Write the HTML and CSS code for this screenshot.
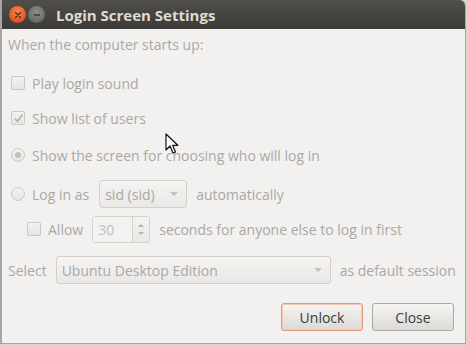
FILE: index.html
```html
<!DOCTYPE html>
<html>
<head>
<meta charset="utf-8">
<link rel="stylesheet" href="styles.css">
</head>
<body>
<div class="window">
  <div class="titlebar">
    <span class="wbtn close-btn"><svg width="8" height="8" viewBox="0 0 8 8"><path d="M1.5 1.5 L6.5 6.5 M6.5 1.5 L1.5 6.5" stroke="#5a2a14" stroke-width="1.4" stroke-linecap="round"/></svg></span>
    <span class="wbtn min-btn"><svg width="8" height="8" viewBox="0 0 8 8"><path d="M1 4 H7" stroke="#3a3a38" stroke-width="1.6"/></svg></span>
    <span class="title">Login Screen Settings</span>
  </div>
  <div class="content">
    <div class="row r-head">When the computer starts up:</div>
    <div class="row r-play"><span class="check"></span><span class="lbl">Play login sound</span></div>
    <div class="row r-list"><span class="check checked"><svg width="11" height="11" viewBox="0 0 11 11"><path d="M2 5.5 L4.5 8.5 L9.5 1.5" fill="none" stroke="#b4b2ae" stroke-width="1.6"/></svg></span><span class="lbl">Show list of users</span></div>
    <div class="row r-screen"><span class="radio on"></span><span class="lbl">Show the screen for choosing who will log in</span></div>
    <div class="row r-login"><span class="radio"></span><span class="lbl">Log in as</span><span class="combo combo-user"><span class="ctext">sid (sid)</span><span class="arrow"></span></span><span class="lbl after">automatically</span></div>
    <div class="row r-allow"><span class="check"></span><span class="lbl">Allow</span><span class="spin"><span class="spin-entry">30</span><span class="spin-btns"><span class="up"></span><span class="down"></span></span></span><span class="lbl after">seconds for anyone else to log in first</span></div>
    <div class="row r-select"><span class="lbl plain">Select</span><span class="combo combo-session"><span class="ctext">Ubuntu Desktop Edition</span><span class="arrow"></span></span><span class="lbl after">as default session</span></div>
    <div class="buttons"><button class="btn focus">Unlock</button><button class="btn">Close</button></div>
  </div>
  <svg class="cursor" width="14" height="22" viewBox="0 0 14 22"><path d="M1 1 L1 17 L5 13 L8 20 L10.5 19 L7.6 12.3 L12.8 12.3 Z" fill="#fff" stroke="#111" stroke-width="1.2" stroke-linejoin="round"/></svg>
</div>
</body>
</html>
```
FILE: styles.css
```css
* { box-sizing: border-box; }
html, body { margin: 0; padding: 0; background: #d8d6d2; }
body { width: 468px; height: 345px; overflow: hidden; font-family: "Open Sans", "DejaVu Sans", sans-serif; }
.window {
  position: relative;
  width: 466px; height: 344px;
  background: #f2f1f0;
  border-left: 2px solid #a8a6a2;
  border-right: 1px solid #a8a6a2;
  border-bottom: 1px solid #a8a6a2;
  border-top-right-radius: 6px;
  overflow: hidden;
  display: flex; flex-direction: column;
}
.titlebar {
  height: 29px; flex: none;
  background: linear-gradient(#4f4e49, #3c3b37);
  display: flex; align-items: center;
  padding-left: 9px;
  margin-left: -2px; margin-right: -1px;
}
.wbtn {
  width: 17px; height: 17px; border-radius: 50%;
  display: flex; align-items: center; justify-content: center;
  margin-right: 2px;
}
.close-btn { background: radial-gradient(circle at 50% 35%, #f98d5c, #e0531a 70%, #b8451a); }
.min-btn { background: radial-gradient(circle at 50% 35%, #8f8d88, #6c6a66 70%, #55534f); }
.title {
  margin-left: 9px;
  color: #dfdbd2; font-weight: bold; font-size: 15px;
  font-family: "Open Sans", "DejaVu Sans", sans-serif;
}
.content { display: flex; flex-direction: column; padding-left: 6px; color: #aaa8a4; font-size: 14px; }
.row { display: flex; align-items: center; white-space: nowrap; }
.r-head { height: 30px; }
.r-play { height: 30px; margin-top: 9px; }
.r-list { height: 30px; margin-top: 5px; }
.r-screen { height: 30px; margin-top: 7px; }
.r-login { height: 28px; margin-top: 10px; }
.r-allow { height: 28px; margin-top: 7px; padding-left: 16px; }
.r-select { height: 28px; margin-top: 13px; }
.check, .radio {
  width: 14px; height: 14px; flex: none;
  margin-left: 3px; margin-right: 7px;
  border: 1px solid #cbc9c5;
  background: linear-gradient(#f3f2f1, #e6e5e3);
  display: flex; align-items: center; justify-content: center;
}
.check { border-radius: 2px; }
.radio { border-radius: 50%; }
.radio.on::after { content: ""; width: 6px; height: 6px; border-radius: 50%; background: #c4c2be; }
.lbl.after { margin-left: 9px; }
.combo {
  display: flex; align-items: center; justify-content: space-between;
  height: 28px;
  border: 1px solid #d3d0cc; border-radius: 3px;
  background: linear-gradient(#f5f4f3, #e9e8e6);
  padding: 0 8px 0 5px;
}
.combo-user { width: 88px; margin-left: 10px; }
.combo-session { width: 275px; margin-left: 9px; }
.arrow { width: 0; height: 0; border-left: 4px solid transparent; border-right: 4px solid transparent; border-top: 4px solid #c4c2be; }
.spin {
  display: flex; height: 27px; width: 58px; margin-left: 9px;
  border: 1px solid #d6d3cf; border-radius: 3px; overflow: hidden;
}
.spin-entry { flex: 1; padding-left: 5px; display: flex; align-items: center; background: #f3f2f1; color: #c2c0bc; }
.spin-btns { width: 17px; border-left: 1px solid #d6d3cf; background: linear-gradient(#f4f3f2, #e8e7e5); display: flex; flex-direction: column; align-items: center; justify-content: center; gap: 5px; }
.up { width: 0; height: 0; border-left: 3px solid transparent; border-right: 3px solid transparent; border-bottom: 3px solid #b5b3af; }
.down { width: 0; height: 0; border-left: 3px solid transparent; border-right: 3px solid transparent; border-top: 3px solid #b5b3af; }
.buttons { display: flex; justify-content: flex-end; gap: 9px; margin-top: 19px; padding-right: 11px; }
.btn {
  width: 82px; height: 28px;
  font-family: "Open Sans", "DejaVu Sans", sans-serif; font-size: 14px; color: #3c3b37;
  border: 1px solid #a9a7a3; border-radius: 3px;
  background: linear-gradient(#f6f5f4, #dcdad6);
  padding: 0;
}
.btn.focus { border-color: #e29a78; box-shadow: inset 0 0 0 1px #f1c9b4; }
.cursor { position: absolute; left: 163px; top: 133px; }
```
